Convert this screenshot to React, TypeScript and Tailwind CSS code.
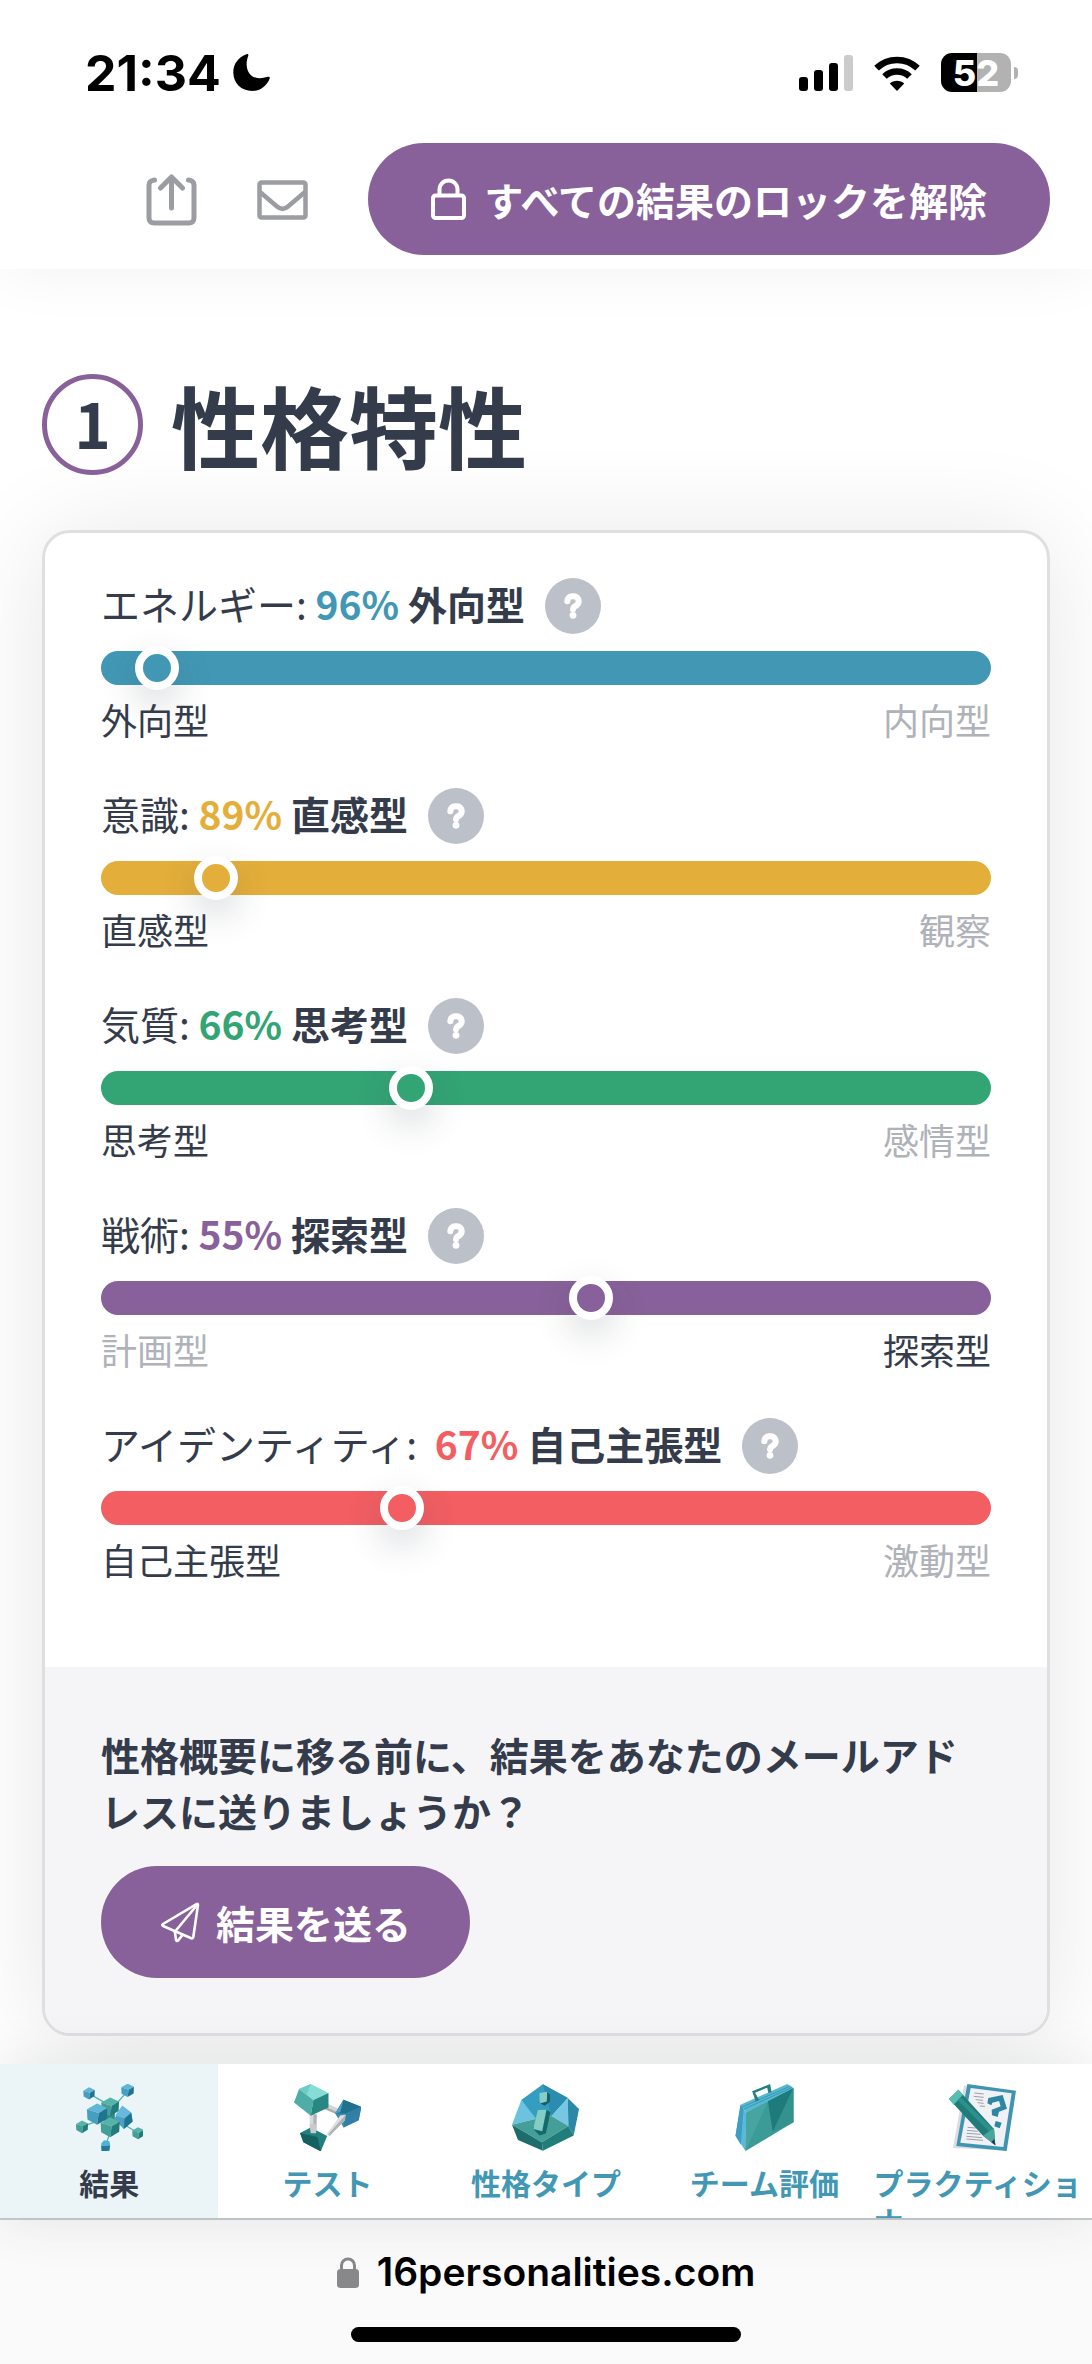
import type { ReactNode } from "react";
import { FaQuestion } from "react-icons/fa6";

interface Trait {
  name: string;
  percent: string;
  result: string;
  left: string;
  right: string;
  value: number;
  active: "left" | "right";
  color: string;
}

interface Tab {
  label: string;
  icon: ReactNode;
  active?: boolean;
}

interface CubeProps {
  x: number;
  y: number;
  r: number;
  tone: "blue" | "green";
}

const traits: Trait[] = [
  { name: "エネルギー: ", percent: "96%", result: "外向型", left: "外向型", right: "内向型", value: 4, active: "left", color: "text-[#4298b4]" },
  { name: "意識: ", percent: "89%", result: "直感型", left: "直感型", right: "観察", value: 11, active: "left", color: "text-[#e4ae3a]" },
  { name: "気質: ", percent: "66%", result: "思考型", left: "思考型", right: "感情型", value: 34, active: "left", color: "text-[#33a474]" },
  { name: "戦術: ", percent: "55%", result: "探索型", left: "計画型", right: "探索型", value: 55.3, active: "right", color: "text-[#88619a]" },
  { name: "アイデンティティ:\u00a0 ", percent: "67%", result: "自己主張型", left: "自己主張型", right: "激動型", value: 33, active: "left", color: "text-[#f25e62]" },
];

function Cube({ x, y, r, tone }: CubeProps) {
  const colors = {
    blue: ["#5fb6d6", "#469fc1", "#1f7590"],
    green: ["#56b3a8", "#459f98", "#217d7c"],
  };
  const [top, left, right] = colors[tone];

  return (
    <g transform={`translate(${x} ${y}) scale(${r})`}>
      <path d="M-.95-.45L0-1 .95-.55 .15-.1Z" fill={top} />
      <path d="M-.95-.45L.15-.1 0 1-.9.5Z" fill={left} />
      <path d="M.15-.1L.95-.55 .9.45 0 1Z" fill={right} />
    </g>
  );
}

function ResultsIcon() {
  return (
    <svg viewBox="0 0 200 200" className="size-[67px]" aria-hidden="true">
      <g stroke="#55b5a8" strokeWidth="4">
        <path d="M48 34L90 58M148 28L118 62M22 126L60 112M182 144L142 120M90 178L102 145" />
      </g>
      <Cube x={39} y={28} r={18} tone="blue" />
      <Cube x={154} y={19} r={20} tone="blue" />
      <Cube x={18} y={128} r={19} tone="green" />
      <Cube x={185} y={147} r={18} tone="green" />
      <path d="M76 177l8-9 16 3 2 12-27 2z" fill="#4fb1d3" />
      <path d="M75 185l27-2-2 16-24 2z" fill="#1f7b99" />
      <path d="M84 80h32v40H84z" fill="#2d8a8d" />
      <Cube x={102} y={68} r={28} tone="green" />
      <Cube x={63} y={90} r={32} tone="blue" />
      <path d="M138 65l27 21 4 26-26 22-29-29z" fill="#4d9fc4" />
      <path d="M138 65l27 21-20 17-28-9z" fill="#68b9dc" />
      <path d="M165 86l4 26-26 22 2-31z" fill="#1f7590" />
      <Cube x={102} y={129} r={30} tone="green" />
    </svg>
  );
}

function TestIcon() {
  return (
    <svg viewBox="0 0 200 200" className="size-[67px]" aria-hidden="true">
      <path d="M84 50l48 24-2 16-46-20z" fill="#d4d4d6" />
      <path d="M84 64l46 20v8L84 72z" fill="#a9abb0" />
      <path d="M46 90h22l-2 56H48z" fill="#d9d9db" />
      <path d="M58 90h10l-2 56h-8z" fill="#b2b3b8" />
      <path d="M50 0l53 27-45 21-43-33z" fill="#86ddd8" />
      <path d="M15 15l43 33-8 47L0 55z" fill="#4fada8" />
      <path d="M58 48l45-21v43L50 95z" fill="#298783" />
      <path d="M15 15L50 0l-12 32z" fill="#6fcbc6" />
      <path d="M18 146l32-16 49 25-19 46-52-27z" fill="#237f7d" />
      <path d="M18 146l52 12 10 43-52-27z" fill="#145f60" />
      <path d="M46 120h22l-2 27H50z" fill="#c9cacd" />
      <path d="M148 47l53 21-8 40-45 22-25-42z" fill="#3a8db0" />
      <path d="M148 47l53 21-47 20-31 0z" fill="#20708f" />
      <path d="M148 47l-10 37-15 4z" fill="#4ba2c3" />
      <path d="M201 68l-8 40-45 22 6-42z" fill="#317fa5" />
      <path d="M138 94l16-2-2 16-45 46-11-2z" fill="#dededf" />
      <path d="M154 92l-2 16-46 47-4-4z" fill="#b0b1b5" />
    </svg>
  );
}

function TypesIcon() {
  return (
    <svg viewBox="0 0 202 201" className="size-[67px]" aria-hidden="true">
      <path d="M93 0l75 42-49 54-52 8-39-56z" fill="#349dc0" />
      <path d="M93 0l75 42-49 54z" fill="#2a8db0" />
      <path d="M28 48l45 56-73 18z" fill="#6bc3df" />
      <path d="M168 42l2 84-51-30z" fill="#76c8e2" />
      <path d="M168 42l34 33-16 80-16-29z" fill="#2b88a6" />
      <path d="M0 122l73-18 46-8 51 30-80 49z" fill="#449f99" />
      <path d="M0 122l90 53 3 26-75-33z" fill="#1c6d6c" />
      <path d="M90 175l80-49 16 29-93 46z" fill="#217d7a" />
      <path d="M80 55l4-6 22-26 9 10-1 20-15 12z" fill="#16616a" />
      <path d="M83 27l23-4-1 29-22 6z" fill="#85cec9" />
      <path d="M62 133l42-56 12 8-14 64-19 6z" fill="#16686b" />
      <path d="M78 78l26-1-13 65-27-7z" fill="#83cdc5" />
    </svg>
  );
}

function TeamIcon() {
  return (
    <svg viewBox="-13 0 200 201" className="size-[67px]" aria-hidden="true">
      <path d="M15 62L155 0l19 12L32 86z" fill="#55b9d4" />
      <path d="M18 70L165 6M24 76L170 10" stroke="#2a87a3" strokeWidth="2" />
      <path d="M15 62l17 24-2 115L0 155z" fill="#5ab8da" />
      <path d="M15 62l9 12-8 108L0 155z" fill="#3c9fc1" />
      <path d="M32 86L174 12v103L30 201z" fill="#3b9b97" />
      <path d="M32 86l65-34-67 149z" fill="#47a5a1" />
      <path d="M97 52l77-40-62 132z" fill="#1e7b7b" />
      <path d="M174 12v103l-62 29z" fill="#33918e" />
      <path d="M50 22l54-22 4 24-9 4-4-17-36 15 12 22-10 5z" fill="#267f80" />
    </svg>
  );
}

function PractitionerIcon() {
  return (
    <svg viewBox="0 0 201 201" className="size-[67px]" aria-hidden="true">
      <path d="M45 5h20l110 195-163-8z" fill="#dcdde1" />
      <path d="M55 0l146 20-28 181-151-15z" fill="#3f95b1" />
      <path d="M65 12l123 16-25 161-129-13z" fill="#f0f1f5" />
      <path
        d="M76 27l28 3M74 37l30 3M80 47l22 2M86 56l18 2M92 66l16 1M56 130l24 2M54 139l32 3M53 148l42 3M52 157l47 4M52 165l50 4"
        stroke="#73757b"
        strokeWidth="2"
      />
      <path d="M118 42l43-9 13 41-24 9-4 16-17-5-1-17 27-10-5-16-20 5-3 8-12-6z" fill="#2c87a4" />
      <path d="M140 111l18 5-6 17-16-6z" fill="#2c87a4" />
      <path d="M0 45l28-28 107 118 4 49-37-29z" fill="#217b79" />
      <path d="M0 45l28-28 14 15-28 30z" fill="#55bdb3" />
      <path d="M35 40l98 96-11 9L26 49z" fill="#2c918a" />
      <path d="M102 155l33-23 4 52z" fill="#4aa69b" />
      <path d="M127 175l9-11 3 20z" fill="#233f49" />
    </svg>
  );
}

const tabs: Tab[] = [
  { label: "結果", icon: <ResultsIcon />, active: true },
  { label: "テスト", icon: <TestIcon /> },
  { label: "性格タイプ", icon: <TypesIcon /> },
  { label: "チーム評価", icon: <TeamIcon /> },
  { label: "プラクティショナー", icon: <PractitionerIcon /> },
];

function StatusBar() {
  return (
    <div className="flex h-[145px] items-center justify-between pr-[74px] pl-[85px] text-black">
      <div className="flex items-center gap-3">
        <span className="font-[Inter,sans-serif] text-[50px] leading-none font-bold">21:34</span>
        <svg viewBox="0 0 37 37" className="size-[37px]" aria-hidden="true">
          <path d="M13.500 .3c1.400-.6 2.200.3 1.700 1.600-1.200 3.300-1.700 6.300-1.500 9.300.5 7.800 5 12.700 12.300 13 3 .1 5.700-.4 8.700-1.400 1.600-.5 2.500.4 1.900 1.900C33.800 31.800 27.300 37 19.200 37 8.300 37 .3 29.200.3 18.300.3 10 5.500 3 13.500.3z" />
        </svg>
      </div>

      <div className="flex items-center gap-5">
        <svg viewBox="0 0 54 36" className="h-[36px] w-[54px]" aria-hidden="true">
          <rect x="0" y="22" width="9" height="14" rx="3" />
          <rect x="15" y="15" width="9" height="21" rx="3" />
          <rect x="30" y="8" width="9" height="28" rx="3" />
          <rect x="45" y="0" width="9" height="36" rx="3" fill="#cbcbcb" />
        </svg>
        <svg viewBox="0 0 48 36" className="h-[36px] w-[48px]" aria-hidden="true">
          <path d="M3.500 13.200a29.500 29.500 0 0 1 41 0M11.500 21.500a18 18 0 0 1 25 0" fill="none" stroke="#000" strokeWidth="6.500" />
          <path d="M24 36l-7.200-7.400c4-3.800 10.400-3.800 14.400 0z" />
        </svg>
        <div className="flex items-center gap-[3px]">
          <div className="flex h-[39px] w-[70px] items-center justify-center rounded-[11px] bg-linear-to-r from-black from-52% to-[#b2b2b2] to-52% font-[Inter,sans-serif] text-[36px] leading-none font-extrabold text-white">
            52
          </div>
          <div className="h-3 w-1 rounded-r-full bg-[#b2b2b2]" />
        </div>
      </div>
    </div>
  );
}

function Header() {
  return (
    <header className="relative z-10 bg-white shadow-[0_0_60px_rgba(0,0,0,0.06)]">
      <StatusBar />
      <div className="flex h-[124px] items-start justify-end gap-[60px] pr-[42px]">
        <button type="button" aria-label="シェア" className="flex h-[110px] items-center">
          <svg viewBox="0 0 51 52" className="h-[52px] w-[51px]" fill="none" stroke="#9b9da2" strokeWidth="5" strokeLinecap="round" strokeLinejoin="round" aria-hidden="true">
            <path d="M8.500 6C5 6.500 3 8 3 11v33c0 3 2 5 5 5h35c3 0 5-2 5-5V11c0-3-2-4.500-5.500-5" />
            <path d="M25.500 34V3M14.500 14l11-11 11 11" />
          </svg>
        </button>
        <button type="button" aria-label="メール" className="flex h-[110px] items-center">
          <svg viewBox="0 0 51 40" className="h-[40px] w-[51px]" fill="none" stroke="#9b9da2" strokeWidth="4.500" strokeLinejoin="round" aria-hidden="true">
            <rect x="2.500" y="2.500" width="46" height="35" rx="2" />
            <path d="M3 12l17 14.500c3.500 3 7.500 3 11 0L48 12" />
          </svg>
        </button>
        <button type="button" className="-mt-0.5 flex h-28 items-center gap-[18px] rounded-full bg-[#88619a] px-[63px] text-[39px] font-bold text-white">
          <svg viewBox="0 0 35 42" className="h-[42px] w-[35px]" fill="none" stroke="#fff" strokeWidth="4" aria-hidden="true">
            <rect x="2" y="17.500" width="31" height="22.500" rx="2.500" />
            <path d="M8.500 17v-5.500a9 9 0 0 1 18 0V17" />
          </svg>
          すべての結果のロックを解除
        </button>
      </div>
    </header>
  );
}

function TraitRow({ trait }: { trait: Trait }) {
  const shade = (side: "left" | "right") => (trait.active === side ? "" : "text-[#afb2b9]");

  return (
    <div className="h-[210px]">
      <div className="flex h-14 items-start gap-5">
        <h3 className="text-[39px] leading-[50px] whitespace-pre">
          {trait.name}
          <span className={`font-bold ${trait.color}`}>{trait.percent}</span>
          <span className="font-bold"> {trait.result}</span>
        </h3>
        <button type="button" aria-label={`${trait.result}の説明`} className="flex size-14 items-center justify-center rounded-full bg-[#bcc0c8] text-white">
          <FaQuestion className="size-[26px] overflow-visible stroke-current stroke-[56px]" />
        </button>
      </div>

      <input
        type="range"
        step="any"
        aria-label={trait.name.trim()}
        defaultValue={trait.value}
        className={`mt-[17px] block h-[34px] w-full appearance-none bg-transparent ${trait.color} [&::-webkit-slider-runnable-track]:h-[34px] [&::-webkit-slider-runnable-track]:rounded-full [&::-webkit-slider-runnable-track]:bg-current [&::-webkit-slider-thumb]:-mt-[5px] [&::-webkit-slider-thumb]:size-[44px] [&::-webkit-slider-thumb]:appearance-none [&::-webkit-slider-thumb]:rounded-full [&::-webkit-slider-thumb]:border-8 [&::-webkit-slider-thumb]:border-solid [&::-webkit-slider-thumb]:border-white [&::-webkit-slider-thumb]:bg-current [&::-webkit-slider-thumb]:shadow-[0_14px_36px_rgba(52,60,75,0.2)]`}
      />

      <div className="mt-2 flex justify-between text-[36px] leading-[52px]">
        <span className={shade("left")}>{trait.left}</span>
        <span className={shade("right")}>{trait.right}</span>
      </div>
    </div>
  );
}

function TabBar() {
  return (
    <nav className="relative z-10 mt-7 grid h-[154px] grid-cols-5 bg-white shadow-[0_0_50px_rgba(52,60,75,0.12)]">
      {tabs.map((tab) => (
        <a
          key={tab.label}
          href="#"
          className={`flex flex-col items-center overflow-hidden pt-5 text-[30px] leading-[38px] font-bold ${
            tab.active ? "bg-[#ebf4f7] text-[#343c4b]" : "text-[#4298b4]"
          }`}
        >
          <span className="shrink-0">{tab.icon}</span>
          <span className="mt-3 break-all">{tab.label}</span>
        </a>
      ))}
    </nav>
  );
}

function App() {
  return (
    <div lang="ja" className="flex min-h-screen flex-col overflow-hidden bg-white font-['Noto_Sans_CJK_JP',sans-serif] text-[#343c4b]">
      <Header />

      <main className="px-[42px] pt-[104px]">
        <h2 className="flex items-center gap-7 text-[89px] leading-[102px] font-bold">
          <span className="flex size-[101px] items-center justify-center rounded-full border-[5px] border-[#88619a] pb-1 text-[62px] leading-none">1</span>
          性格特性
        </h2>

        <section className="mt-[55px] overflow-hidden rounded-[28px] border-[3px] border-[#dddfe1] bg-white shadow-[0_6px_100px_rgba(0,0,0,0.1)]">
          <div className="px-14 pt-[45px] pb-[39px]">
            {traits.map((trait) => (
              <TraitRow key={trait.name} trait={trait} />
            ))}
          </div>

          <div className="bg-[#f5f5f8] px-14 pt-[59px] pb-[55px]">
            <p className="text-[39px] leading-[56px] font-bold">性格概要に移る前に、結果をあなたのメールアドレスに送りましょうか？</p>
            <button type="button" className="mt-7 flex h-28 items-center gap-4 rounded-full bg-[#88619a] px-[59px] text-[39px] font-bold text-white">
              <svg viewBox="0 0 40 41" className="h-[41px] w-[40px]" fill="none" stroke="#fff" strokeWidth="2.600" strokeLinecap="round" strokeLinejoin="round" aria-hidden="true">
                <path d="M36.500 2.200L3 22c-1 .6-1 1.600.1 2L31.200 36.200c1.200.5 2 0 2.100-1.200L38 3c.1-1-.6-1.400-1.500-.8z" />
                <path d="M37.500 2.500L15.500 29M14.800 29.500l1.200 8.300c.2 1.400 1.300 1.600 2.200.6l4.300-5.400" />
              </svg>
              結果を送る
            </button>
          </div>
        </section>
      </main>

      <TabBar />

      <footer className="flex flex-1 flex-col items-center border-t-2 border-[#c8cbce] bg-[#fafafa] pt-[26px] font-[Inter,sans-serif] text-black">
        <a href="#" className="flex items-center gap-[18px] text-[39px] leading-[52px] font-semibold">
          <svg viewBox="0 0 22 31" className="h-[31px] w-[22px]" aria-hidden="true">
            <rect y="12" width="22" height="19" rx="3.500" fill="#88888b" />
            <path d="M4.500 14V8.500a6.500 6.500 0 0 1 13 0V14" fill="none" stroke="#88888b" strokeWidth="3" />
          </svg>
          16personalities.com
        </a>
        <div className="mt-[29px] h-[15px] w-[390px] rounded-full bg-black" />
      </footer>
    </div>
  );
}

export default App;
